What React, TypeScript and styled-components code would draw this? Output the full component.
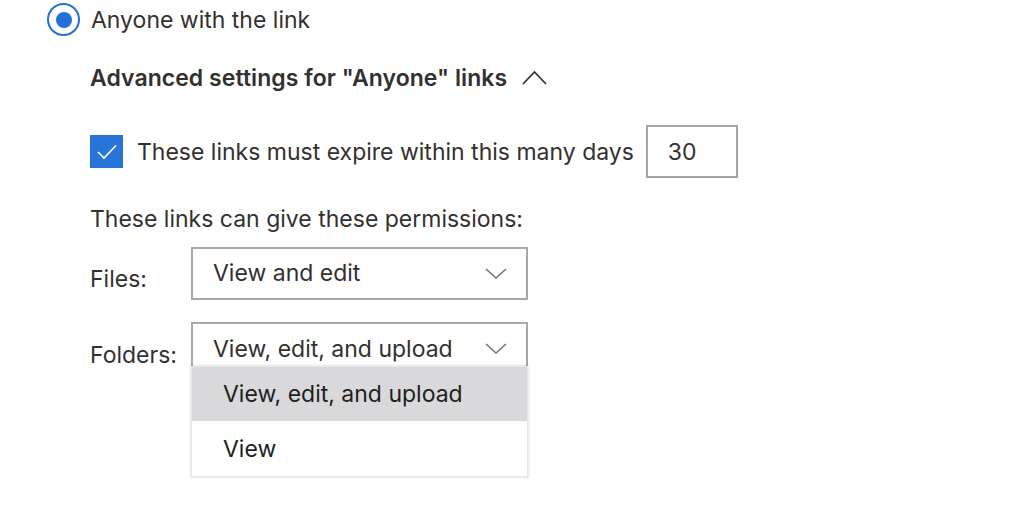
import React from "react";
import styled, { createGlobalStyle } from "styled-components";

const GlobalStyle = createGlobalStyle`
  body {
    margin: 0;
    background: #ffffff;
    font-family: Inter, "Liberation Sans", Arial, sans-serif;
    font-size: 23px;
    line-height: 28px;
    color: #323130;
  }
`;

const Page = styled.div`
  padding: 3px 0 0 47px;
  width: 1024px;
  height: 520px;
  box-sizing: border-box;
  overflow: hidden;
`;

const RadioRow = styled.label`
  display: flex;
  align-items: center;
  gap: 11px;
`;

const RadioOuter = styled.span`
  width: 33px;
  height: 33px;
  box-sizing: border-box;
  border: 2px solid #2371d8;
  border-radius: 50%;
  display: flex;
  align-items: center;
  justify-content: center;
`;

const RadioDot = styled.span`
  width: 16px;
  height: 16px;
  border-radius: 50%;
  background: #2371d8;
`;

const Section = styled.div`
  padding-left: 43px;
`;

const Heading = styled.div`
  display: flex;
  align-items: center;
  gap: 15px;
  margin-top: 28px;
  font-weight: 600;
  letter-spacing: 0.05px;
`;

const CheckRow = styled.div`
  display: flex;
  align-items: center;
  margin-top: 33px;
`;

const CheckBox = styled.span`
  width: 33px;
  height: 33px;
  background: #2775d9;
  display: flex;
  align-items: center;
  justify-content: center;
  margin-right: 14px;
`;

const DaysInput = styled.div`
  width: 92px;
  height: 53px;
  box-sizing: border-box;
  border: 2px solid #a6a6a6;
  margin-left: 12px;
  padding-left: 20px;
  display: flex;
  align-items: center;
`;

const Caption = styled.div`
  margin-top: 27px;
`;

const FieldRow = styled.div<{ $top: number }>`
  display: flex;
  align-items: flex-start;
  margin-top: ${(p) => p.$top}px;
`;

const FieldLabel = styled.div<{ $offset: number }>`
  width: 101px;
  padding-top: ${(p) => p.$offset}px;
`;

const SelectWrap = styled.div`
  position: relative;
`;

const Select = styled.div`
  width: 337px;
  height: 53px;
  box-sizing: border-box;
  border: 2px solid #a8a8a8;
  display: flex;
  align-items: center;
  justify-content: space-between;
  padding: 0 19px 0 20px;
`;

const SelectText = styled.span<{ $lift: number }>`
  margin-top: -${(p) => p.$lift}px;
`;

const Menu = styled.div`
  position: absolute;
  top: 44px;
  left: 0;
  width: 337px;
  background: #ffffff;
  box-shadow: 0 0 2px 1px rgba(0, 0, 0, 0.1);
  border: 1px solid #e8e8e8;
  box-sizing: border-box;
`;

const Option = styled.div<{ $selected?: boolean }>`
  height: ${(p) => (p.$selected ? 54 : 55)}px;
  display: flex;
  align-items: center;
  padding-left: 31px;
  background: ${(p) => (p.$selected ? "#d9d8da" : "#ffffff")};
  color: #201f1e;
`;

const ChevronDown = () => (
  <svg width="22" height="12" viewBox="0 0 22 12">
    <polyline points="1,1 11,10 21,1" fill="none" stroke="#6e6d6c" strokeWidth="1.4" />
  </svg>
);

const ChevronUp = () => (
  <svg width="25" height="16" viewBox="0 0 25 16">
    <polyline points="1,14 12.5,2 24,14" fill="none" stroke="#323130" strokeWidth="1.8" />
  </svg>
);

const CheckMark = () => (
  <svg width="20" height="16" viewBox="0 0 20 16">
    <polyline points="1,8 7,14 19,1.5" fill="none" stroke="#ffffff" strokeWidth="1.6" />
  </svg>
);

export default function App() {
  return (
    <Page>
      <GlobalStyle />
      <RadioRow>
        <RadioOuter>
          <RadioDot />
        </RadioOuter>
        Anyone with the link
      </RadioRow>
      <Section>
        <Heading>
          Advanced settings for "Anyone" links
          <ChevronUp />
        </Heading>
        <CheckRow>
          <CheckBox>
            <CheckMark />
          </CheckBox>
          These links must expire within this many days
          <DaysInput>30</DaysInput>
        </CheckRow>
        <Caption>These links can give these permissions:</Caption>
        <FieldRow $top={14}>
          <FieldLabel $offset={18}>Files:</FieldLabel>
          <SelectWrap>
            <Select>
              <SelectText $lift={2}>View and edit</SelectText>
              <ChevronDown />
            </Select>
          </SelectWrap>
        </FieldRow>
        <FieldRow $top={22}>
          <FieldLabel $offset={19}>Folders:</FieldLabel>
          <SelectWrap>
            <Select>
              <SelectText $lift={0}>View, edit, and upload</SelectText>
              <ChevronDown />
            </Select>
            <Menu>
              <Option $selected>View, edit, and upload</Option>
              <Option>View</Option>
            </Menu>
          </SelectWrap>
        </FieldRow>
      </Section>
    </Page>
  );
}
